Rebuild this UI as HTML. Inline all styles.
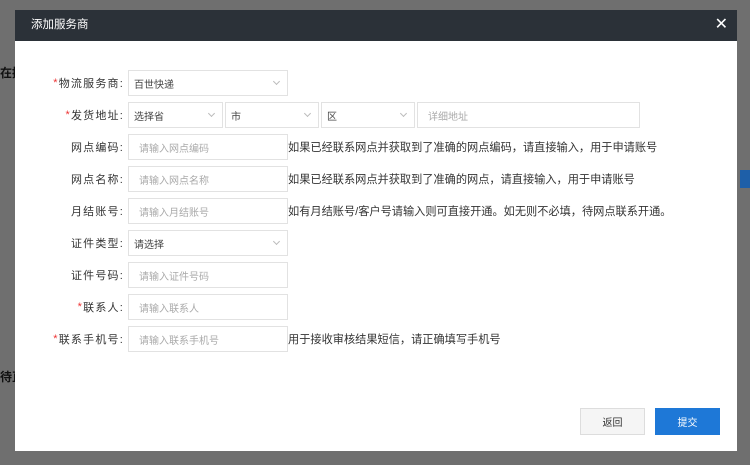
<!DOCTYPE html>
<html><head><meta charset="utf-8"><style>
*{box-sizing:border-box;margin:0;padding:0}
body{width:750px;height:465px;overflow:hidden;background:#6f6f6f;font-family:"Liberation Sans","Noto Sans CJK SC",sans-serif;font-size:11px;color:#333;position:relative}
.bg{position:absolute;color:#111;font-size:12px;font-weight:bold}
.dlg{position:absolute;left:15px;top:10px;width:722px;height:441px;background:#fff}
.hd{height:31px;background:#2b3138;color:#fff;font-size:11.5px;line-height:31px;padding-left:16px}
.x{position:absolute;right:9px;top:5px;color:#fff;font-size:16px;line-height:20px}
.lb{position:absolute;right:613px;width:120px;text-align:right;height:26px;display:flex;align-items:center;justify-content:flex-end;letter-spacing:1.2px;color:#333;font-size:11px}
.lb b{color:#e33;font-weight:normal}
.in{position:absolute;height:26px;border:1px solid #e2e2e2;display:flex;align-items:center;padding-left:5px;color:#444;font-size:10px}
.ph{color:#aaa}
.in.ph{padding-left:10px}
.ar{position:absolute;right:8px;top:8px;width:5px;height:5px;border-right:1px solid #bbb;border-bottom:1px solid #bbb;transform:rotate(45deg)}
.tip{position:absolute;left:273px;height:26px;display:flex;align-items:center;color:#333;font-size:11.2px}
.btn{position:absolute;top:398px;width:65px;height:27px;display:flex;align-items:center;justify-content:center;font-size:10px}
</style></head><body>
<div class="bg" style="left:0;top:64px">在提</div>
<div class="bg" style="left:0;top:368px">待直</div>
<div style="position:absolute;left:740px;top:170px;width:10px;height:18px;background:#1e5fa8"></div>
<div class="dlg">
<div class="hd">添加服务商</div><div class="x">✕</div>
<div class="lb" style="top:60px"><b>*</b>物流服务商:</div>
<div class="in" style="left:113px;top:60px;width:160px">百世快递<span class="ar"></span></div>
<div class="lb" style="top:92px"><b>*</b>发货地址:</div>
<div class="in" style="left:113px;top:92px;width:95px">选择省<span class="ar"></span></div>
<div class="in" style="left:210px;top:92px;width:94px">市<span class="ar"></span></div>
<div class="in" style="left:306px;top:92px;width:94px">区<span class="ar"></span></div>
<div class="in ph" style="left:402px;top:92px;width:223px">详细地址</div>
<div class="lb" style="top:124px">网点编码:</div>
<div class="in ph" style="left:113px;top:124px;width:160px">请输入网点编码</div>
<div class="tip" style="top:124px">如果已经联系网点并获取到了准确的网点编码，请直接输入，用于申请账号</div>
<div class="lb" style="top:156px">网点名称:</div>
<div class="in ph" style="left:113px;top:156px;width:160px">请输入网点名称</div>
<div class="tip" style="top:156px">如果已经联系网点并获取到了准确的网点，请直接输入，用于申请账号</div>
<div class="lb" style="top:188px">月结账号:</div>
<div class="in ph" style="left:113px;top:188px;width:160px">请输入月结账号</div>
<div class="tip" style="top:188px">如有月结账号/客户号请输入则可直接开通。如无则不必填，待网点联系开通。</div>
<div class="lb" style="top:220px">证件类型:</div>
<div class="in" style="left:113px;top:220px;width:160px">请选择<span class="ar"></span></div>
<div class="lb" style="top:252px">证件号码:</div>
<div class="in ph" style="left:113px;top:252px;width:160px">请输入证件号码</div>
<div class="lb" style="top:284px"><b>*</b>联系人:</div>
<div class="in ph" style="left:113px;top:284px;width:160px">请输入联系人</div>
<div class="lb" style="top:316px"><b>*</b>联系手机号:</div>
<div class="in ph" style="left:113px;top:316px;width:160px">请输入联系手机号</div>
<div class="tip" style="top:316px">用于接收审核结果短信，请正确填写手机号</div>
<div class="btn" style="left:565px;background:#f5f5f5;border:1px solid #ddd;color:#333">返回</div>
<div class="btn" style="left:640px;background:#1e78d7;color:#fff">提交</div>
</div>
</body></html>
